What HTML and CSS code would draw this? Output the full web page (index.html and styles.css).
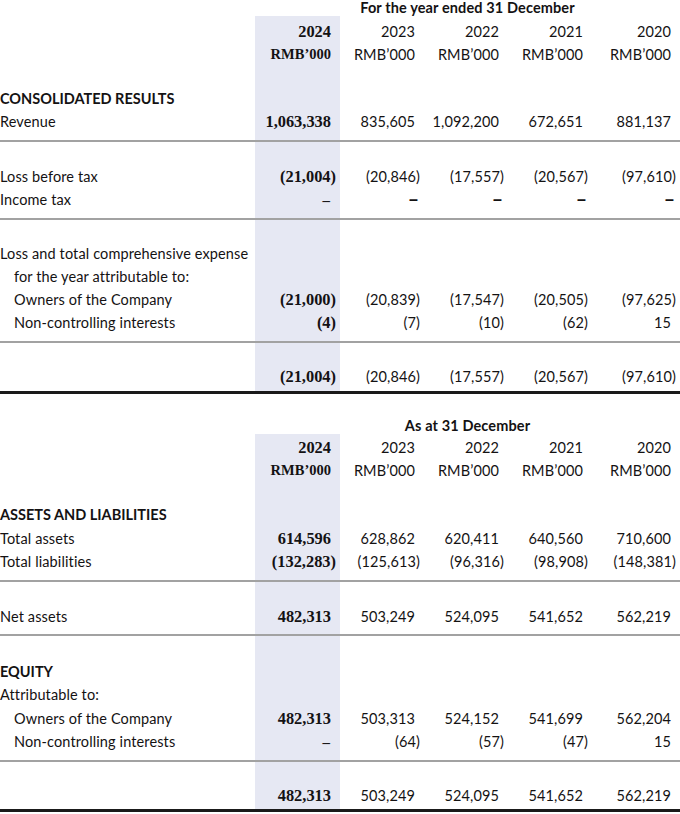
FILE: index.html
```html
<!DOCTYPE html>
<html lang="en">
<head>
<meta charset="utf-8">
<title>Financial Summary</title>
<link rel="stylesheet" href="styles.css">
</head>
<body>
<table class="fin fin-first">
  <colgroup><col class="c-label"><col class="c-hl"><col class="c-d"><col class="c-d"><col class="c-d"><col class="c-last"></colgroup>
  <tr class="period-row"><td></td><td colspan="5" class="period">For the year ended 31 December</td></tr>
  <tr class="yr"><td></td><td class="hl">2024</td><td>2023</td><td>2022</td><td>2021</td><td>2020</td></tr>
  <tr class="unit"><td></td><td class="hl">RMB’000</td><td>RMB’000</td><td>RMB’000</td><td>RMB’000</td><td>RMB’000</td></tr>
  <tr class="blank"><td></td><td class="hl"></td><td></td><td></td><td></td><td></td></tr>
  <tr><td class="sec">CONSOLIDATED RESULTS</td><td class="hl"></td><td></td><td></td><td></td><td></td></tr>
  <tr class="rule"><td>Revenue</td><td class="hl">1,063,338</td><td>835,605</td><td>1,092,200</td><td>672,651</td><td>881,137</td></tr>
  <tr class="after"><td>Loss before tax</td><td class="hl"><span class="neg">(21,004)</span></td><td><span class="neg">(20,846)</span></td><td><span class="neg">(17,557)</span></td><td><span class="neg">(20,567)</span></td><td><span class="neg">(97,610)</span></td></tr>
  <tr class="rule"><td>Income tax</td><td class="hl"><span class="dash">–</span></td><td><span class="dash">–</span></td><td><span class="dash">–</span></td><td><span class="dash">–</span></td><td><span class="dash">–</span></td></tr>
  <tr class="after"><td>Loss and total comprehensive expense</td><td class="hl"></td><td></td><td></td><td></td><td></td></tr>
  <tr><td class="ind">for the year attributable to:</td><td class="hl"></td><td></td><td></td><td></td><td></td></tr>
  <tr><td class="ind">Owners of the Company</td><td class="hl"><span class="neg">(21,000)</span></td><td><span class="neg">(20,839)</span></td><td><span class="neg">(17,547)</span></td><td><span class="neg">(20,505)</span></td><td><span class="neg">(97,625)</span></td></tr>
  <tr class="rule"><td class="ind">Non-controlling interests</td><td class="hl"><span class="neg">(4)</span></td><td><span class="neg">(7)</span></td><td><span class="neg">(10)</span></td><td><span class="neg">(62)</span></td><td>15</td></tr>
  <tr class="after total"><td></td><td class="hl"><span class="neg">(21,004)</span></td><td><span class="neg">(20,846)</span></td><td><span class="neg">(17,557)</span></td><td><span class="neg">(20,567)</span></td><td><span class="neg">(97,610)</span></td></tr>
</table>

<table class="fin fin-second">
  <colgroup><col class="c-label"><col class="c-hl"><col class="c-d"><col class="c-d"><col class="c-d"><col class="c-last"></colgroup>
  <tr class="period-row"><td></td><td colspan="5" class="period">As at 31 December</td></tr>
  <tr class="yr"><td></td><td class="hl">2024</td><td>2023</td><td>2022</td><td>2021</td><td>2020</td></tr>
  <tr class="unit"><td></td><td class="hl">RMB’000</td><td>RMB’000</td><td>RMB’000</td><td>RMB’000</td><td>RMB’000</td></tr>
  <tr class="blank"><td></td><td class="hl"></td><td></td><td></td><td></td><td></td></tr>
  <tr><td class="sec">ASSETS AND LIABILITIES</td><td class="hl"></td><td></td><td></td><td></td><td></td></tr>
  <tr><td>Total assets</td><td class="hl">614,596</td><td>628,862</td><td>620,411</td><td>640,560</td><td>710,600</td></tr>
  <tr class="rule"><td>Total liabilities</td><td class="hl"><span class="neg">(132,283)</span></td><td><span class="neg">(125,613)</span></td><td><span class="neg">(96,316)</span></td><td><span class="neg">(98,908)</span></td><td><span class="neg">(148,381)</span></td></tr>
  <tr class="after rule"><td>Net assets</td><td class="hl">482,313</td><td>503,249</td><td>524,095</td><td>541,652</td><td>562,219</td></tr>
  <tr class="after"><td class="sec">EQUITY</td><td class="hl"></td><td></td><td></td><td></td><td></td></tr>
  <tr><td>Attributable to:</td><td class="hl"></td><td></td><td></td><td></td><td></td></tr>
  <tr><td class="ind">Owners of the Company</td><td class="hl">482,313</td><td>503,313</td><td>524,152</td><td>541,699</td><td>562,204</td></tr>
  <tr class="rule"><td class="ind">Non-controlling interests</td><td class="hl"><span class="dash">–</span></td><td><span class="neg">(64)</span></td><td><span class="neg">(57)</span></td><td><span class="neg">(47)</span></td><td>15</td></tr>
  <tr class="after total"><td></td><td class="hl">482,313</td><td>503,249</td><td>524,095</td><td>541,652</td><td>562,219</td></tr>
</table>
</body>
</html>
```

FILE: styles.css
```css
html, body {
  margin: 0;
  padding: 0;
  background: #ffffff;
}

body {
  font-family: Lato, "Liberation Sans", sans-serif;
  font-size: 14.5px;
  letter-spacing: 0.12px;
  color: #141213;
  width: 680px;
  overflow: hidden;
}

.fin {
  border-collapse: collapse;
  table-layout: fixed;
  width: 680px;
}

.fin-second {
  margin-top: 24px;
}

.c-label { width: 255px; }
.c-hl { width: 85px; }
.c-d { width: 84px; }
.c-last { width: 88px; }

.fin td {
  padding-top: 0;
  padding-bottom: 0;
  padding-left: 0;
  padding-right: 9px;
  line-height: 23px;
  white-space: nowrap;
  vertical-align: middle;
  text-align: right;
}

.fin-second td {
  line-height: 23.4px;
}

.fin td:first-child {
  text-align: left;
  padding-right: 0;
}

.fin td.ind {
  padding-left: 14px;
}

.fin td.sec {
  font-weight: 700;
  letter-spacing: 0;
}

.fin td.hl {
  background: #e6e8f3;
  font-family: "Liberation Serif", "Times New Roman", serif;
  font-weight: 700;
  font-size: 16.4px;
  letter-spacing: 0;
}

.fin .unit td.hl {
  font-size: 14.5px;
}

.fin .period-row td {
  height: 16px;
  line-height: 16px;
  vertical-align: top;
}

.fin-first .period-row td {
  line-height: 15px;
}

.fin td.period {
  text-align: center;
  padding-right: 0;
  font-weight: 700;
}

.fin-first .yr td { padding-top: 4px; }
.fin-second .yr td { padding-top: 2px; }

.fin .blank td { height: 21px; }

.fin tr.rule td {
  padding-bottom: 7px;
  border-bottom: 2px solid #a2a2a2;
}

.fin-second tr.rule td {
  padding-bottom: 6px;
}

.fin tr.after td {
  padding-top: 22.5px;
}

.fin-second tr.after td {
  padding-top: 23.5px;
}

.fin tr.total td {
  padding-bottom: 3px;
  border-bottom: 3px solid #1a1a1a;
}

.fin-first tr.total td {
  padding-top: 21.5px;
}

.fin-second tr.total td {
  padding-top: 22.5px;
  padding-bottom: 2px;
}

.neg {
  margin-right: -5px;
}

.dash {
  font-family: "Liberation Sans", sans-serif;
  font-size: 16px;
  font-weight: 700;
  line-height: 1;
  margin-right: -3px;
}

.hl .dash {
  font-family: "Liberation Serif", serif;
  font-size: 15px;
  font-weight: 700;
  margin-right: 1px;
}
```
